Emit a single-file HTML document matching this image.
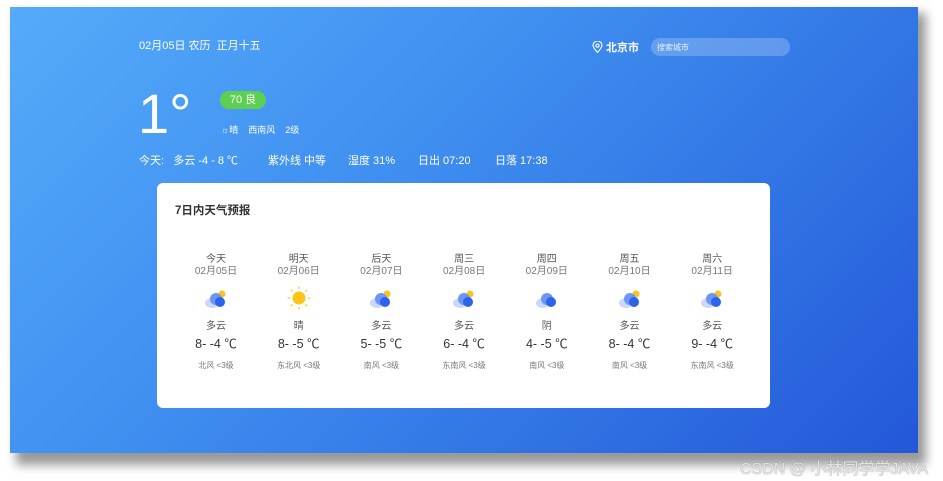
<!DOCTYPE html>
<html><head><meta charset="utf-8"><style>
*{margin:0;padding:0;box-sizing:border-box}
body{width:943px;height:481px;background:#fff;position:relative;overflow:hidden;font-family:"Liberation Sans","Noto Sans CJK SC",sans-serif}
.shadow{position:absolute;left:16px;top:13px;width:910px;height:452px;background:#999;filter:blur(5px)}
.panel{position:absolute;left:10px;top:7px;width:908px;height:446px;background:linear-gradient(135deg,#55abfa 0%,#3f8ff0 40%,#2358d8 100%);color:#fff}
.a{position:absolute;white-space:nowrap}
.card{position:absolute;left:147px;top:176px;width:613px;height:225px;background:#fff;border-radius:6px;color:#333}
.col{position:absolute;top:71px;width:80px;margin-left:-40px;text-align:center;font-size:10px;color:#555}
.col .d{line-height:12px}
.col .ic{height:38px;position:relative}
.col .c{font-size:10px;margin-top:1px}
.col .t{font-size:12.5px;color:#333;margin-top:1px}
.col .w{font-size:8px;color:#777;margin-top:8px}
.wm{position:absolute;left:740px;top:455px;font-size:16px;color:#e4e4e4;text-shadow:0 0 1px #777}
</style></head><body>
<div class="shadow"></div>
<div class="panel">
<div class="a" style="left:129px;top:30px;font-size:11px">02月05日 农历&nbsp; 正月十五</div>
<div class="a" style="left:582px;top:32px;font-size:11px;font-weight:bold">
<svg width="11" height="12" viewBox="0 0 11 12" style="vertical-align:-2px"><path d="M5.5 11.5C2.5 8 1 6 1 4.5a4.5 4.5 0 0 1 9 0C10 6 8.5 8 5.5 11.5z" fill="none" stroke="#fff" stroke-width="1.1"/><circle cx="5.5" cy="4.6" r="1.6" fill="none" stroke="#fff" stroke-width="1.1"/></svg> 北京市</div>
<div class="a" style="left:641px;top:31px;width:139px;height:18px;border-radius:9px;background:rgba(255,255,255,.22);font-size:8px;color:#e6efff;padding:4px 6px">搜索城市</div>
<div class="a" style="left:128px;top:77px;font-size:56px;font-weight:300;line-height:60px">1°</div>
<div class="a" style="left:210px;top:84px;width:46px;height:18px;border-radius:9px;background:#5fcf52;font-size:11px;text-align:center;line-height:18px">70 良</div>
<div class="a" style="left:211px;top:116px;font-size:9px">☼晴&nbsp;&nbsp;&nbsp; 西南风&nbsp;&nbsp;&nbsp; 2级</div>
<div class="a" style="left:129px;top:145px;font-size:11px">今天:&nbsp;&nbsp; 多云 -4 - 8 ℃</div>
<div class="a" style="left:258px;top:145px;font-size:11px">紫外线 中等</div>
<div class="a" style="left:338px;top:145px;font-size:11px">湿度 31%</div>
<div class="a" style="left:408px;top:145px;font-size:11px">日出 07:20</div>
<div class="a" style="left:485px;top:145px;font-size:11px">日落 17:38</div>
<div class="card">
<div class="a" style="left:18px;top:19px;font-size:11.5px;font-weight:bold;color:#333">7日内天气预报</div>
<div id="cols"></div>
</div>
</div>
<div class="wm">CSDN @ 小林同学学JAVA</div>
<script>
var d=[["今天","02月05日","多云","8- -4 ℃","北风 &lt;3级"],["明天","02月06日","晴","8- -5 ℃","东北风 &lt;3级"],["后天","02月07日","多云","5- -5 ℃","南风 &lt;3级"],["周三","02月08日","多云","6- -4 ℃","东南风 &lt;3级"],["周四","02月09日","阴","4- -5 ℃","南风 &lt;3级"],["周五","02月10日","多云","8- -4 ℃","南风 &lt;3级"],["周六","02月11日","多云","9- -4 ℃","东南风 &lt;3级"]];
var cl='<svg width="26" height="22" viewBox="0 0 26 22"><circle cx="19" cy="6" r="3.5" fill="#f9c51a"/><ellipse cx="9" cy="15" rx="7" ry="5" fill="#c9d8fb"/><circle cx="13" cy="11" r="6" fill="#6d95f3"/><circle cx="17" cy="14" r="5" fill="#2c63ea"/></svg>';
var yin='<svg width="26" height="22" viewBox="0 0 26 22"><ellipse cx="9" cy="15" rx="7" ry="5" fill="#c9d8fb"/><circle cx="13" cy="11" r="6" fill="#6d95f3"/><circle cx="17" cy="14" r="5" fill="#2c63ea"/></svg>';
var sun='<svg width="26" height="26" viewBox="0 0 26 26"><circle cx="13" cy="13" r="6.5" fill="#fbc515"/><g stroke="#fbc515" stroke-width="1.2">'+[0,45,90,135,180,225,270,315].map(function(a){return '<line x1="13" y1="1.5" x2="13" y2="4" transform="rotate('+a+' 13 13)"/>'}).join('')+'</g></svg>';
var h='';d.forEach(function(r,i){var ic=r[2]=="晴"?sun:(r[2]=="阴"?yin:cl);
h+='<div class="col" style="left:'+(59+i*82.7)+'px"><div class="d">'+r[0]+'</div><div class="d" style="color:#777">'+r[1]+'</div><div class="ic" style="padding-top:'+(r[2]=="晴"?7:10)+'px">'+ic+'</div><div class="c">'+r[2]+'</div><div class="t">'+r[3]+'</div><div class="w">'+r[4]+'</div></div>';});
document.getElementById('cols').innerHTML=h;
</script>
</body></html>
